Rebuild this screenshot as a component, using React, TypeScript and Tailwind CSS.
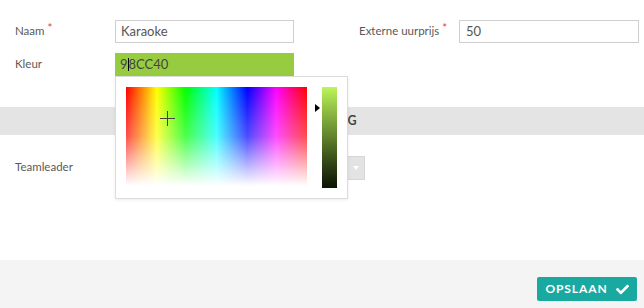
import { FaCheck } from 'react-icons/fa'

const font = { fontFamily: 'Lato, "Open Sans", "Liberation Sans", sans-serif' }

function Label({ text, required }: { text: string; required?: boolean }) {
  return (
    <div className="text-[11.5px] text-[#5a5a5a] -mt-[2px]">
      {text}
      {required && <span className="text-[#e0403a] ml-[3px] relative -top-[3px]">*</span>}
    </div>
  )
}

function ColorPicker() {
  return (
    <div className="absolute left-[115px] top-[76px] w-[233px] h-[123px] bg-white border border-[#dcdcdc] shadow-[0_1px_3px_rgba(0,0,0,0.08)] z-10">
      <div className="absolute left-[10px] top-[10px] w-[181px] h-[99px] bg-[linear-gradient(to_right,#ff0000,#ffff00_17%,#00ff00_33%,#00ffff_50%,#0000ff_67%,#ff00ff_83%,#ff0000)]">
        <div className="absolute inset-0 bg-linear-to-b from-transparent via-[rgba(255,255,255,0.3)] to-white" />
        {/* crosshair */}
        <div className="absolute left-[34px] top-[31px] w-[15px] h-[1px] bg-[#444]" />
        <div className="absolute left-[41px] top-[24px] w-[1px] h-[15px] bg-[#444]" />
      </div>
      <div className="absolute left-[199px] top-[27px] w-0 h-0 border-y-[4px] border-y-transparent border-l-[5px] border-l-black" />
      <div className="absolute left-[206px] top-[10px] w-[15px] h-[101px] bg-linear-to-b from-[#bdf55a] via-[#5f812b] to-[#0c1404]" />
    </div>
  )
}

export default function App() {
  return (
    <div style={font} className="relative w-[644px] h-[308px] bg-white flex flex-col overflow-hidden">
      {/* form */}
      <div className="pt-[20px] flex flex-col gap-[10px]">
        <div className="flex items-center">
          <div className="w-[115px] pl-[15px]">
            <Label text="Naam" required />
          </div>
          <div className="w-[179px] h-[23px] border border-[#cfcfcf] px-[5px] flex items-center text-[13px] text-[#555]">
            Karaoke
          </div>
          <div className="w-[165px] pl-[65px]">
            <Label text="Externe uurprijs" required />
          </div>
          <div className="w-[180px] h-[23px] border border-[#cfcfcf] px-[6px] flex items-center text-[13px] text-[#555]">
            50
          </div>
        </div>
        <div className="flex items-center">
          <div className="w-[115px] pl-[15px]">
            <Label text="Kleur" />
          </div>
          <div className="w-[179px] h-[23px] border border-[#8fb2d8] bg-[#98cc40] px-[4px] flex items-center text-[13px] text-[#444]">
            9<span className="inline-block w-[1px] h-[13px] bg-black" />8CC40
          </div>
        </div>
      </div>

      {/* section band */}
      <div className="mt-[31px] h-[28px] bg-[#e4e4e4] flex items-center">
        <div className="w-[357px] text-right text-[12.5px] font-bold text-[#444] tracking-[0.5px]">PLANNING</div>
      </div>

      {/* teamleader */}
      <div className="pt-[21px] flex items-center">
        <div className="w-[115px] pl-[15px]">
          <Label text="Teamleader" />
        </div>
        <div className="w-[250px] h-[24px] border border-[#d6d6d6] flex justify-end">
          <div className="w-[17px] h-full bg-[#e3e3e3] flex items-center justify-center">
            <div className="w-0 h-0 border-x-[3px] border-x-transparent border-t-[4px] border-t-white" />
          </div>
        </div>
      </div>

      <div className="flex-1" />

      {/* footer */}
      <div className="h-[48px] bg-[#f4f4f4] flex justify-end pt-[17px] pr-[7px]">
        <button className="w-[100px] h-[24px] bg-[#19a9a1] rounded-[2px] text-white text-[12px] font-bold tracking-[0.9px] flex items-center justify-center gap-[8px]">
          OPSLAAN
          <FaCheck className="w-[13px] h-[13px]" />
        </button>
      </div>

      <ColorPicker />
    </div>
  )
}
